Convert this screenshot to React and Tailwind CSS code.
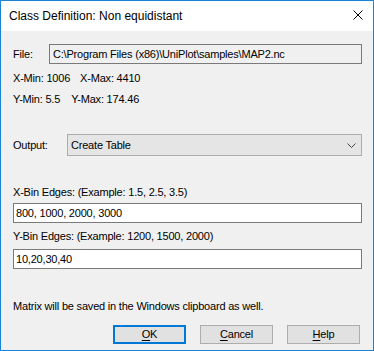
import React from 'react';

const font = { fontFamily: '"Liberation Sans", Arial, sans-serif' };

const Underlined = ({ first, rest }) => (
  <span>
    <span className="underline underline-offset-2">{first}</span>
    {rest}
  </span>
);

const Button = ({ children, primary }) => (
  <button
    className={
      primary
        ? 'h-[19px] w-[73px] border-2 border-[#0078d7] bg-[#e1e1e1] text-[11px] leading-[13px] text-black'
        : 'h-[19px] w-[73px] border border-[#adadad] bg-[#e1e1e1] text-[11px] leading-[13px] text-black'
    }
  >
    {children}
  </button>
);

export default function App() {
  return (
    <div
      className="flex h-[351px] w-[374px] flex-col border border-[#1883d7] bg-[#f0f0f0] text-[11px] leading-[13px] tracking-[-0.2px] text-black"
      style={font}
    >
      {/* title bar */}
      <div className="flex h-[30px] items-center justify-between bg-white pl-[8px] pr-[10px]">
        <span className="text-[12px] tracking-normal">Class Definition: Non equidistant</span>
        <svg width="10" height="10" viewBox="0 0 10 10" className="mb-[2px]">
          <path d="M0.5 0.5 L9.5 9.5 M9.5 0.5 L0.5 9.5" stroke="#000" strokeWidth="1" fill="none" />
        </svg>
      </div>

      <div className="flex flex-1 flex-col pl-[12px] pr-[11px]">
        {/* file */}
        <div className="mt-[13px] flex items-center">
          <span className="w-[36px]">File:</span>
          <div className="flex h-[20px] flex-1 items-center border border-[#7a7a7a] pl-[3px]">
            C:\Program Files (x86)\UniPlot\samples\MAP2.nc
          </div>
        </div>

        <div className="mt-[8px] flex">
          <span>X-Min: 1006</span>
          <span className="ml-[10px]">X-Max: 4410</span>
        </div>
        <div className="mt-[8px] flex">
          <span>Y-Min: 5.5</span>
          <span className="ml-[11px]">Y-Max: 174.46</span>
        </div>

        {/* output */}
        <div className="mt-[28px] flex items-center">
          <span className="w-[54px]">Output:</span>
          <div className="flex h-[22px] flex-1 items-center justify-between border border-[#adadad] bg-[#e5e5e5] pl-[3px] pr-[5px]">
            <span>Create Table</span>
            <svg width="9" height="5" viewBox="0 0 9 5">
              <path d="M0.5 0.5 L4.5 4.5 L8.5 0.5" stroke="#444" strokeWidth="1" fill="none" />
            </svg>
          </div>
        </div>

        {/* x bins */}
        <div className="mt-[30px]">X-Bin Edges: (Example: 1.5, 2.5, 3.5)</div>
        <div className="mt-[4px] flex h-[20px] items-center border border-[#7a7a7a] bg-white pl-[2px]">
          800, 1000, 2000, 3000
        </div>

        {/* y bins */}
        <div className="mt-[7px]">Y-Bin Edges: (Example: 1200, 1500, 2000)</div>
        <div className="mt-[6px] flex h-[20px] items-center border border-[#7a7a7a] bg-white pl-[2px]">
          10,20,30,40
        </div>

        <div className="mt-[31px]">Matrix will be saved in the Windows clipboard as well.</div>

        <div className="mt-[12px] flex gap-[14px] pl-[100px]">
          <Button primary>
            <Underlined first="O" rest="K" />
          </Button>
          <Button>
            <Underlined first="C" rest="ancel" />
          </Button>
          <Button>
            <Underlined first="H" rest="elp" />
          </Button>
        </div>
      </div>
    </div>
  );
}
